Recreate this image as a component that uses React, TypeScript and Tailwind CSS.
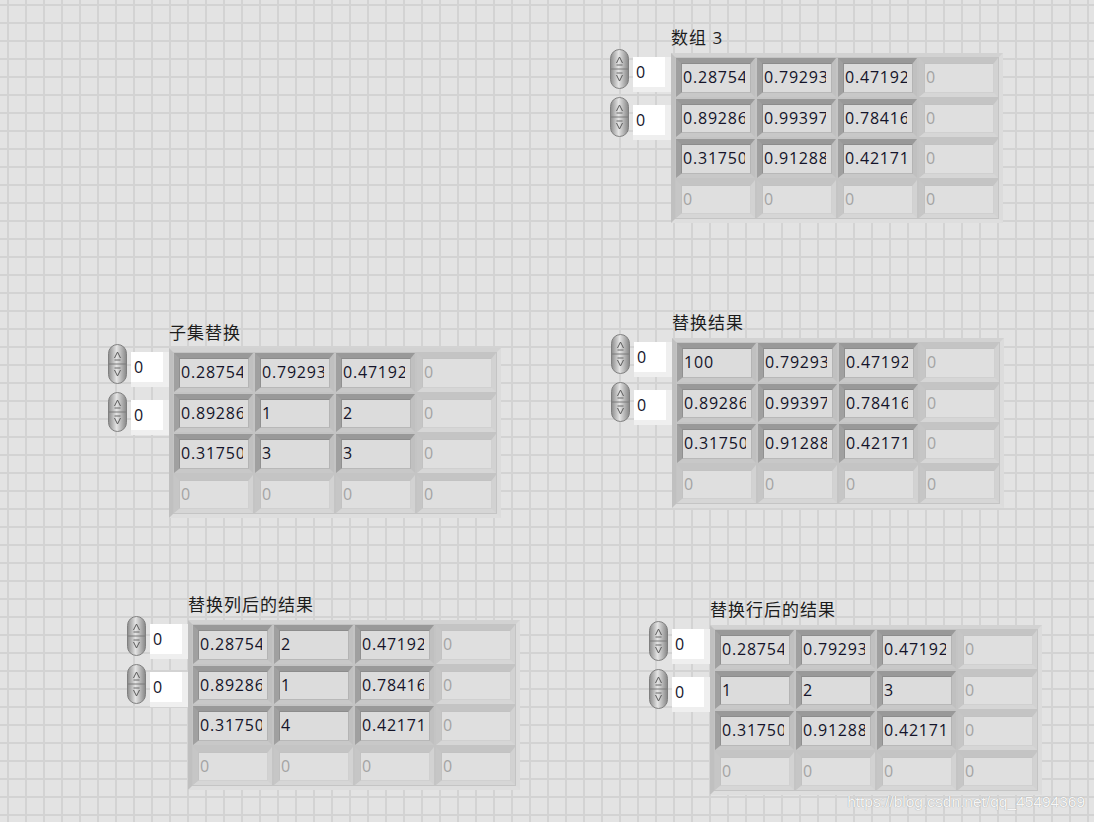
import React from "react";

type Cell = string;

const Spinner = () => (
  <svg width="21" height="40" viewBox="0 0 21 40" className="block shrink-0">
    <defs>
      <linearGradient id="spg" x1="0" y1="0" x2="1" y2="0">
        <stop offset="0" stopColor="#8c8c8c" />
        <stop offset="0.45" stopColor="#e4e4e4" />
        <stop offset="1" stopColor="#868686" />
      </linearGradient>
    </defs>
    <rect x="1.5" y="0.5" width="18" height="39" rx="9" fill="url(#spg)" stroke="#808080" />
    <line x1="2" y1="20" x2="19" y2="20" stroke="#7a7a7a" />
    <path d="M7.5 14 L10.5 8 L13.5 14" fill="none" stroke="#5a5a5a" strokeWidth="1" />
    <line x1="7.5" y1="16" x2="13.5" y2="16" stroke="#6a6a6a" />
    <line x1="7.5" y1="24" x2="13.5" y2="24" stroke="#6a6a6a" />
    <path d="M7.5 26 L10.5 32 L13.5 26" fill="none" stroke="#5a5a5a" strokeWidth="1" />
  </svg>
);

const IndexControl = () => (
  <div className="flex items-start gap-[3px]">
    <Spinner />
    <div className="mt-[8px] bg-[#efefef] pr-[6px] pb-[5px]">
      <div className="w-[32px] h-[30px] bg-white pl-[3px] text-[16px] leading-[30px] tracking-[0.8px] text-[#14142a]">0</div>
    </div>
  </div>
);

const ValueCell = ({ v, empty }: { v: Cell; empty?: boolean }) => (
  <div className="p-[1px]">
    <div
      className={
        empty
          ? "h-full border-t-[5px] border-l-[5px] border-r-[4px] border-b-[4px] border-t-[#c4c4c4] border-l-[#c6c6c6] border-r-[#d2d2d2] border-b-[#d6d6d6]"
          : "h-full border-t-[5px] border-l-[5px] border-r-[4px] border-b-[4px] border-t-[#999999] border-l-[#a0a0a0] border-r-[#c0c0c0] border-b-[#c8c8c8]"
      }
    >
      <div
        className={
          empty
            ? "h-full border border-t-[#c2c2c2] border-l-[#c2c2c2] border-r-[#d0d0d0] border-b-[#d0d0d0] bg-[#dfdfdf] pl-[1px] text-[16px] leading-[27px] tracking-[0.8px] text-[#a4a4a4]"
            : "h-full border border-t-[#8c8c8c] border-l-[#909090] border-r-[#b4b4b4] border-b-[#b8b8b8] bg-[#dcdcdc] pl-[1px] text-[16px] leading-[27px] tracking-[0.8px] text-[#14142a]"
        }
      >
        <div className="w-[62px] overflow-hidden whitespace-nowrap">{v}</div>
      </div>
    </div>
  </div>
);

const ArrayControl = ({ label, rows, className }: { label: string; rows: Cell[][]; className: string }) => (
  <div className={"absolute flex items-start " + className}>
    <div className="flex w-[62px] flex-col gap-[5px] pt-[22px]">
      <IndexControl />
      <IndexControl />
    </div>
    <div className="flex flex-col">
      <div className="mb-[4px] h-[22px] text-[17px] leading-[22px] tracking-[1px] text-[#1c1c1c]">{label}</div>
      <div className="grid w-[332px] grid-cols-[81px_81px_81px_81px] grid-rows-[41px_40px_41px_40px] border-t-[4px] border-l-[4px] border-r-[4px] border-b-[4px] border-t-[#d2d2d2] border-l-[#c0c0c0] border-r-[#dcdcdc] border-b-[#dedede] bg-[#c4c4c4]">
        {[0, 1, 2, 3].map((r) =>
          [0, 1, 2, 3].map((c) => {
            const empty = r === 3 || c === 3;
            return <ValueCell key={r + "-" + c} v={empty ? "0" : rows[r][c]} empty={empty} />;
          })
        )}
      </div>
    </div>
  </div>
);

const base = [
  ["0.28754", "0.79293", "0.47192"],
  ["0.89286", "0.99397", "0.78416"],
  ["0.31750", "0.91288", "0.42171"],
];

export default function App() {
  return (
    <div
      className="relative h-[822px] w-[1094px] overflow-hidden bg-[#e3e3e3] bg-[linear-gradient(to_right,#d3d3d3_2px,transparent_2px),linear-gradient(to_bottom,#d3d3d3_2px,transparent_2px)] bg-[size:18px_18px] bg-[position:7px_4px]"
      style={{ fontFamily: '"Open Sans", "Noto Sans CJK SC", "Noto Sans", sans-serif' }}
    >
      <ArrayControl className="left-[609px] top-[27px]" label="数组 3" rows={base} />
      <ArrayControl
        className="left-[107px] top-[322px]"
        label="子集替换"
        rows={[
          ["0.28754", "0.79293", "0.47192"],
          ["0.89286", "1", "2"],
          ["0.31750", "3", "3"],
        ]}
      />
      <ArrayControl
        className="left-[610px] top-[312px]"
        label="替换结果"
        rows={[
          ["100", "0.79293", "0.47192"],
          ["0.89286", "0.99397", "0.78416"],
          ["0.31750", "0.91288", "0.42171"],
        ]}
      />
      <ArrayControl
        className="left-[126px] top-[594px]"
        label="替换列后的结果"
        rows={[
          ["0.28754", "2", "0.47192"],
          ["0.89286", "1", "0.78416"],
          ["0.31750", "4", "0.42171"],
        ]}
      />
      <ArrayControl
        className="left-[648px] top-[599px]"
        label="替换行后的结果"
        rows={[
          ["0.28754", "0.79293", "0.47192"],
          ["1", "2", "3"],
          ["0.31750", "0.91288", "0.42171"],
        ]}
      />
      <div className="absolute right-[9px] top-[792px] text-[15.5px] leading-[20px] text-[#f6f6f6] [font-family:'Liberation_Sans',Arial,sans-serif] [text-shadow:0_0_1px_#8a8a8a]">
        https://blog.csdn.net/qq_45494369
      </div>
    </div>
  );
}
